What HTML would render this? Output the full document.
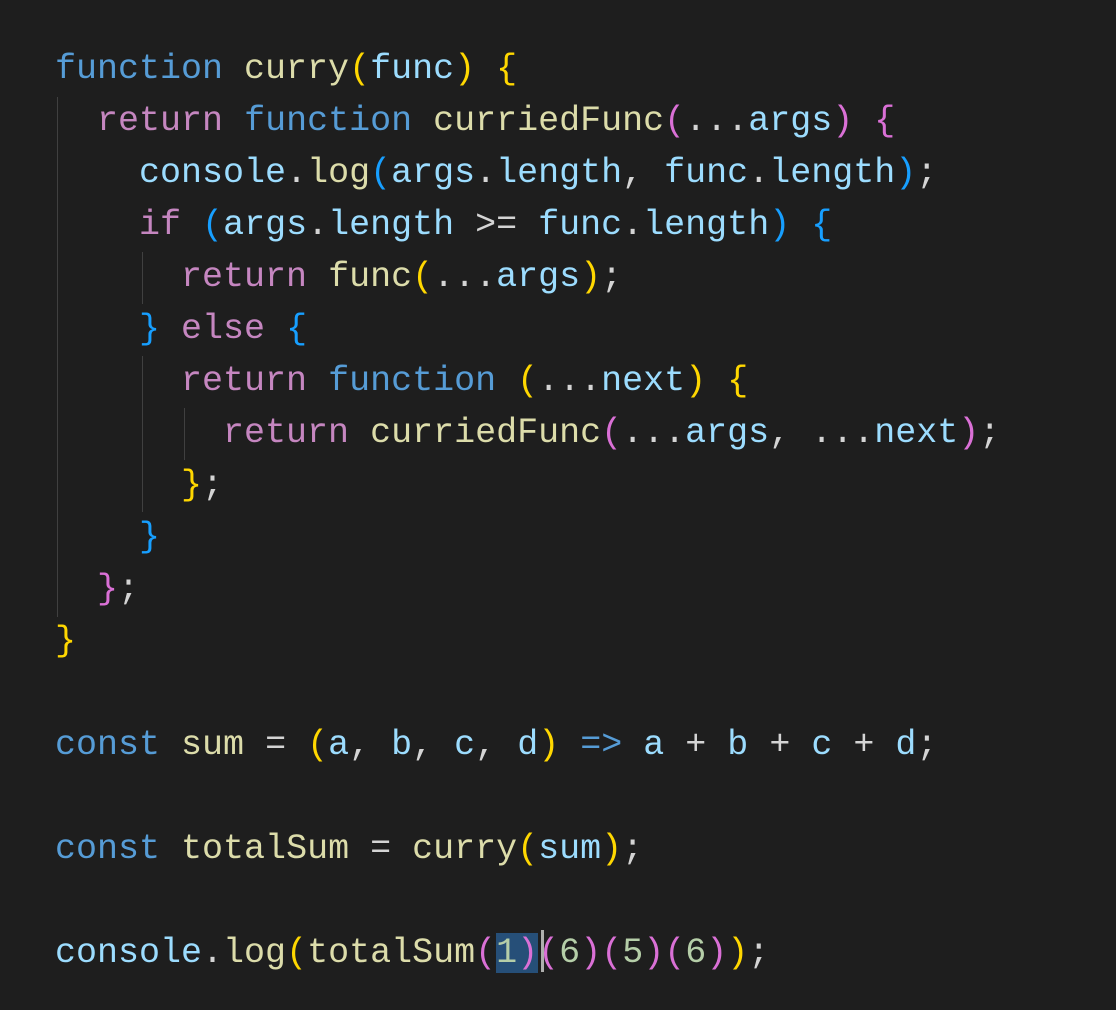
<!DOCTYPE html>
<html><head><style>
body{margin:0;background:#1e1e1e;width:1116px;height:1010px;overflow:hidden;position:relative}
pre{position:absolute;left:55px;top:43px;margin:0;font-family:"Liberation Mono",monospace;font-size:35px;line-height:52px;color:#d4d4d4}
.k{color:#569cd6}.c{color:#c586c0}.f{color:#dcdcaa}.v{color:#9cdcfe}.n{color:#b5cea8}
.y{color:#ffd700}.p{color:#da70d6}.b{color:#179fff}
.g{position:absolute;width:1px;background:#404040}
.sel{background:#264f78}
.cur{position:absolute;left:541px;top:930px;width:3px;height:42px;background:#aeafad}
</style></head><body>
<div class="g" style="left:57px;top:97px;height:520px"></div>
<div class="g" style="left:142px;top:252px;height:52px"></div>
<div class="g" style="left:142px;top:356px;height:156px"></div>
<div class="g" style="left:184px;top:408px;height:52px"></div>
<div class="cur"></div>
<pre><span class="k">function</span> <span class="f">curry</span><span class="y">(</span><span class="v">func</span><span class="y">)</span> <span class="y">{</span>
  <span class="c">return</span> <span class="k">function</span> <span class="f">curriedFunc</span><span class="p">(</span>...<span class="v">args</span><span class="p">)</span> <span class="p">{</span>
    <span class="v">console</span>.<span class="f">log</span><span class="b">(</span><span class="v">args</span>.<span class="v">length</span>, <span class="v">func</span>.<span class="v">length</span><span class="b">)</span>;
    <span class="c">if</span> <span class="b">(</span><span class="v">args</span>.<span class="v">length</span> &gt;= <span class="v">func</span>.<span class="v">length</span><span class="b">)</span> <span class="b">{</span>
      <span class="c">return</span> <span class="f">func</span><span class="y">(</span>...<span class="v">args</span><span class="y">)</span>;
    <span class="b">}</span> <span class="c">else</span> <span class="b">{</span>
      <span class="c">return</span> <span class="k">function</span> <span class="y">(</span>...<span class="v">next</span><span class="y">)</span> <span class="y">{</span>
        <span class="c">return</span> <span class="f">curriedFunc</span><span class="p">(</span>...<span class="v">args</span>, ...<span class="v">next</span><span class="p">)</span>;
      <span class="y">}</span>;
    <span class="b">}</span>
  <span class="p">}</span>;
<span class="y">}</span>

<span class="k">const</span> <span class="f">sum</span> = <span class="y">(</span><span class="v">a</span>, <span class="v">b</span>, <span class="v">c</span>, <span class="v">d</span><span class="y">)</span> <span class="k">=&gt;</span> <span class="v">a</span> + <span class="v">b</span> + <span class="v">c</span> + <span class="v">d</span>;

<span class="k">const</span> <span class="f">totalSum</span> = <span class="f">curry</span><span class="y">(</span><span class="v">sum</span><span class="y">)</span>;

<span class="v">console</span>.<span class="f">log</span><span class="y">(</span><span class="f">totalSum</span><span class="p">(</span><span class="sel"><span class="n">1</span><span class="p">)</span></span><span class="p">(</span><span class="n">6</span><span class="p">)(</span><span class="n">5</span><span class="p">)(</span><span class="n">6</span><span class="p">)</span><span class="y">)</span>;</pre>
</body></html>
